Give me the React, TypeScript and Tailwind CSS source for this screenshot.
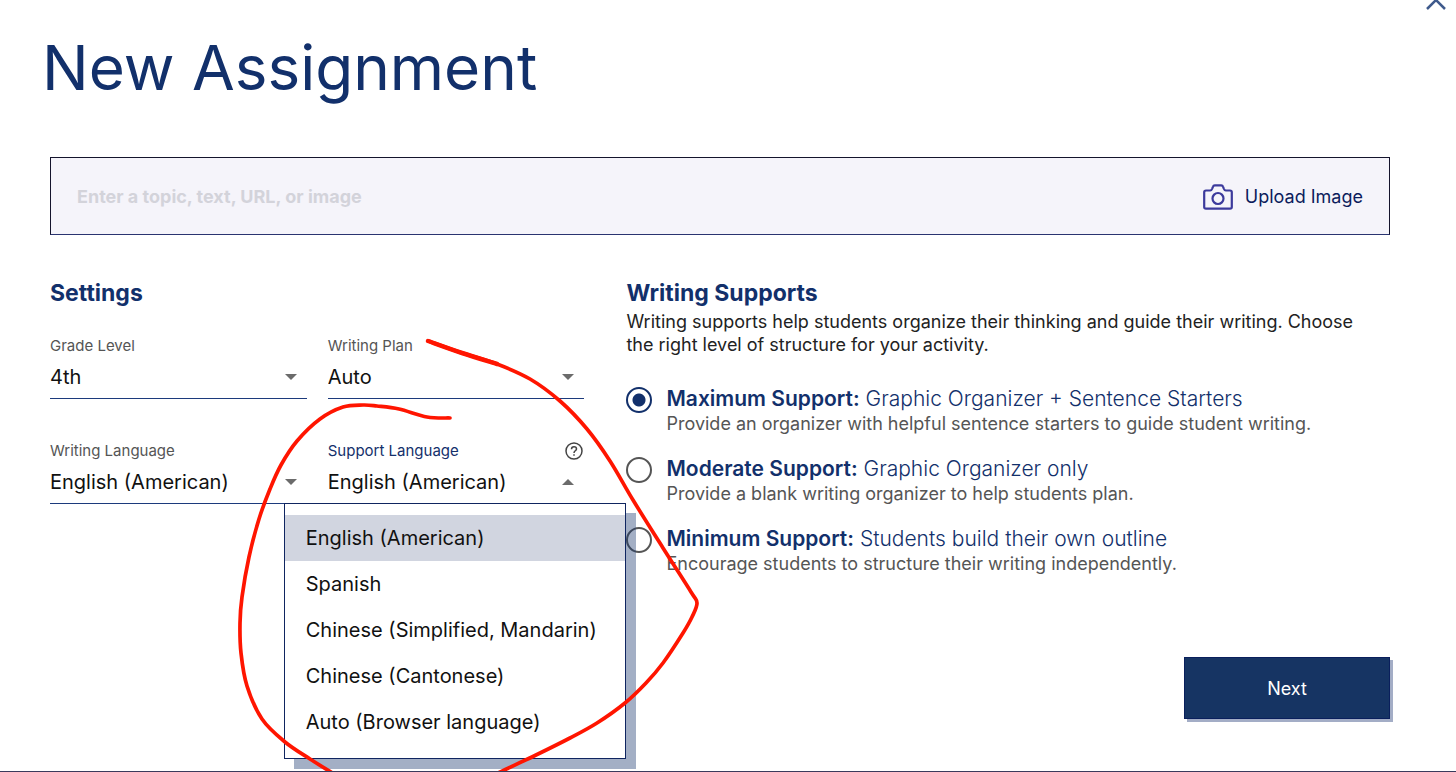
import { useState } from "react";

const languages = [
  "English (American)",
  "Spanish",
  "Chinese (Simplified, Mandarin)",
  "Chinese (Cantonese)",
  "Auto (Browser language)",
];

const supports = [
  {
    id: "maximum",
    name: "Maximum Support:",
    detail: "Graphic Organizer + Sentence Starters",
    help: "Provide an organizer with helpful sentence starters to guide student writing.",
  },
  {
    id: "moderate",
    name: "Moderate Support:",
    detail: "Graphic Organizer only",
    help: "Provide a blank writing organizer to help students plan.",
  },
  {
    id: "minimum",
    name: "Minimum Support:",
    detail: "Students build their own outline",
    help: "Encourage students to structure their writing independently.",
  },
];

function Caret({ up = false }: { up?: boolean }) {
  return (
    <svg
      viewBox="0 0 12 6"
      className="pointer-events-none absolute right-[10px] top-3 h-[6px] w-3 fill-[#6b6b6b]"
      aria-hidden="true"
    >
      <path d={up ? "M0 6L6 0L12 6Z" : "M0 0H12L6 6Z"} />
    </svg>
  );
}

function SelectField({ id, label, options }: { id: string; label: string; options: string[] }) {
  return (
    <div>
      <label htmlFor={id} className="block text-[15px] leading-5 text-[#555]">
        {label}
      </label>
      <div className="relative mt-[6px] border-b border-[#1c3a7c]">
        <select
          id={id}
          className="block h-9 w-full appearance-none bg-transparent pb-[6px] text-[20px] leading-[30px] text-[#111] outline-none"
        >
          {options.map((o) => (
            <option key={o}>{o}</option>
          ))}
        </select>
        <Caret />
      </div>
    </div>
  );
}

function SupportLanguageField() {
  const [open, setOpen] = useState(true);
  const [value, setValue] = useState(languages[0]);
  return (
    <div className="relative">
      <div className="flex h-5 items-center justify-between">
        <span id="support-language" className="text-[15px] leading-5 text-[#14306b]">
          Support Language
        </span>
        <button type="button" aria-label="About support language" className="mr-px">
          <svg viewBox="0 0 18 18" className="block size-[18px]" fill="none" stroke="#444" strokeWidth="1.5" aria-hidden="true">
            <circle cx="9" cy="9" r="8" />
            <path d="M6.5 7.2C6.5 5.7 7.6 4.7 9 4.7C10.4 4.7 11.5 5.6 11.5 6.9C11.5 8.7 9 8.9 9 10.9" />
            <path d="M9 12.2V13.8" />
          </svg>
        </button>
      </div>
      <div className="relative mt-[6px] border-b border-[#1c3a7c]">
        <button
          type="button"
          aria-haspopup="listbox"
          aria-expanded={open}
          aria-labelledby="support-language"
          onClick={() => setOpen(!open)}
          className="block h-9 w-full pb-[6px] text-left text-[20px] leading-[30px] text-[#111]"
        >
          {value}
        </button>
        <Caret up={open} />
      </div>
      {open && (
        <ul
          role="listbox"
          aria-labelledby="support-language"
          className="absolute -left-11 top-[62px] z-10 w-[342px] border border-[#0f2560] bg-white pt-[11px] pb-[13px] shadow-[10px_10px_0_rgba(25,55,110,0.4)]"
        >
          {languages.map((l) => (
            <li
              key={l}
              role="option"
              aria-selected={l === value}
              onClick={() => {
                setValue(l);
                setOpen(false);
              }}
              className="h-[46px] cursor-pointer px-[21px] text-[20px] leading-[46px] whitespace-nowrap text-[#111] aria-selected:bg-[#d1d5e0]"
            >
              {l}
            </li>
          ))}
        </ul>
      )}
    </div>
  );
}

type Point = [number, number];

const rightStroke: Point[] = [
  [428, 341], [462, 353], [497, 364], [530, 379], [560, 401], [587, 429], [610, 461], [633, 500], [663, 548], [691, 592],
  [697, 603], [692, 617], [683, 633], [663, 663], [646, 683], [625, 703], [597, 723], [570, 738], [536, 755], [498, 773],
];

const leftStroke: Point[] = [
  [334, 774], [310, 759], [285, 742], [262, 719], [247, 686], [241, 653], [240, 623], [242, 597], [249, 557], [259, 519],
  [270, 489], [281, 465], [297, 441], [320, 419], [343, 407], [363, 405], [377, 406], [399, 409], [427, 417], [450, 418],
];

// Catmull-Rom spline through the pen points.
function smooth(points: Point[]) {
  let d = `M${points[0][0]} ${points[0][1]}`;
  for (let i = 0; i < points.length - 1; i++) {
    const a = points[Math.max(i - 1, 0)];
    const b = points[i];
    const c = points[i + 1];
    const e = points[Math.min(i + 2, points.length - 1)];
    d += `C${b[0] + (c[0] - a[0]) / 6} ${b[1] + (c[1] - a[1]) / 6} ${c[0] - (e[0] - b[0]) / 6} ${c[1] - (e[1] - b[1]) / 6} ${c[0]} ${c[1]}`;
  }
  return d;
}

function Scribble() {
  return (
    <svg
      viewBox="0 0 1456 772"
      className="pointer-events-none absolute left-0 top-0 z-20 h-[772px] w-[1456px]"
      fill="none"
      stroke="#ff1500"
      strokeWidth="3.700"
      strokeLinecap="round"
      strokeLinejoin="round"
      aria-hidden="true"
    >
      <path d={smooth(rightStroke)} />
      <path d={smooth(rightStroke.slice(0, 3))} strokeWidth="4.500" />
      <path d={smooth(leftStroke)} />
    </svg>
  );
}

export default function App() {
  const [support, setSupport] = useState("maximum");
  return (
    <main className="relative min-h-screen overflow-hidden border-b border-[#3a3a5c] bg-white pr-[66px] pl-[50px] font-[Inter,sans-serif] text-[#111]">
      <button type="button" aria-label="Close" className="absolute -top-3 right-2">
        <svg viewBox="0 0 24 24" className="block size-6" fill="none" stroke="#3f5a8c" strokeWidth="2.500" aria-hidden="true">
          <path d="M3 3L21 21M21 3L3 21" />
        </svg>
      </button>

      <h1 className="-ml-2 pt-[29px] text-[62px] leading-[78px] text-[#12306b]">New Assignment</h1>

      <div className="mt-[50px] flex h-[78px] items-center border border-[#14142c] border-b-[#2a3470] bg-[#f5f4fa] px-[26px]">
        <input
          type="text"
          aria-label="Assignment topic"
          placeholder="Enter a topic, text, URL, or image"
          className="h-full min-w-0 flex-1 bg-transparent text-[18px] font-bold outline-none placeholder:text-[#d3d3da]"
        />
        <button type="button" className="mt-[2px] flex items-center gap-3 text-[18px] leading-6 text-[#0c1c5c]">
          <svg viewBox="0 0 30 26" className="h-[26px] w-[30px]" fill="none" stroke="#3c3a9c" strokeWidth="2.200" strokeLinejoin="round" aria-hidden="true">
            <path d="M3 6.500H7.200C8.300 6.500 8.600 6 9.200 4.600L10 2.600C10.300 1.700 10.800 1.300 11.700 1.300H18.300C19.200 1.300 19.700 1.700 20 2.600L20.800 4.600C21.400 6 21.700 6.500 22.800 6.500H27C28.200 6.500 28.800 7.100 28.800 8.200V23C28.800 24.100 28.200 24.700 27 24.700H3C1.800 24.700 1.200 24.100 1.200 23V8.200C1.200 7.100 1.800 6.500 3 6.500Z" />
            <circle cx="15" cy="14.500" r="5.500" />
          </svg>
          Upload Image
        </button>
      </div>

      <div className="mt-11 grid grid-cols-[7fr_10fr] gap-[42px]">
        <section>
          <h2 className="text-[23px] leading-7 font-bold text-[#12306b]">Settings</h2>
          <div className="mt-[29px] grid grid-cols-2 gap-x-[21px] gap-y-[42px]">
            <SelectField id="grade" label="Grade Level" options={["4th"]} />
            <SelectField id="plan" label="Writing Plan" options={["Auto"]} />
            <SelectField id="language" label="Writing Language" options={["English (American)"]} />
            <SupportLanguageField />
          </div>
        </section>

        <section>
          <h2 className="text-[23px] leading-7 font-bold text-[#12306b]">Writing Supports</h2>
          <p className="mt-[3px] pr-4 text-[18px] leading-[23px] text-[#222]">
            Writing supports help students organize their thinking and guide their writing. Choose the right level of
            structure for your activity.
          </p>
          <div role="radiogroup" aria-label="Writing Supports" className="mt-7 flex flex-col gap-5">
            {supports.map((s) => (
              <div key={s.id} className="flex gap-[14px]">
                <input
                  type="radio"
                  id={s.id}
                  name="support"
                  checked={support === s.id}
                  onChange={() => setSupport(s.id)}
                  className="mt-[3px] size-[26px] shrink-0 appearance-none rounded-full border-2 border-[#555] checked:border-[#12306b] checked:bg-[radial-gradient(circle,#12306b_6px,transparent_7px)]"
                />
                <label htmlFor={s.id} className="block">
                  <span className="block text-[21px] leading-[30px] font-light text-[#12306b]">
                    <strong className="font-semibold">{s.name}</strong> {s.detail}
                  </span>
                  <span className="block text-[18px] leading-5 text-[#555]">{s.help}</span>
                </label>
              </div>
            ))}
          </div>
        </section>
      </div>

      <div className="mt-[83px] flex justify-end pb-[52px]">
        <button
          type="button"
          className="h-[62px] w-[206px] border border-[#0a1f5c] bg-[#163463] text-[18px] text-white shadow-[3px_3px_0_#a3adc6]"
        >
          Next
        </button>
      </div>

      <Scribble />
    </main>
  );
}
